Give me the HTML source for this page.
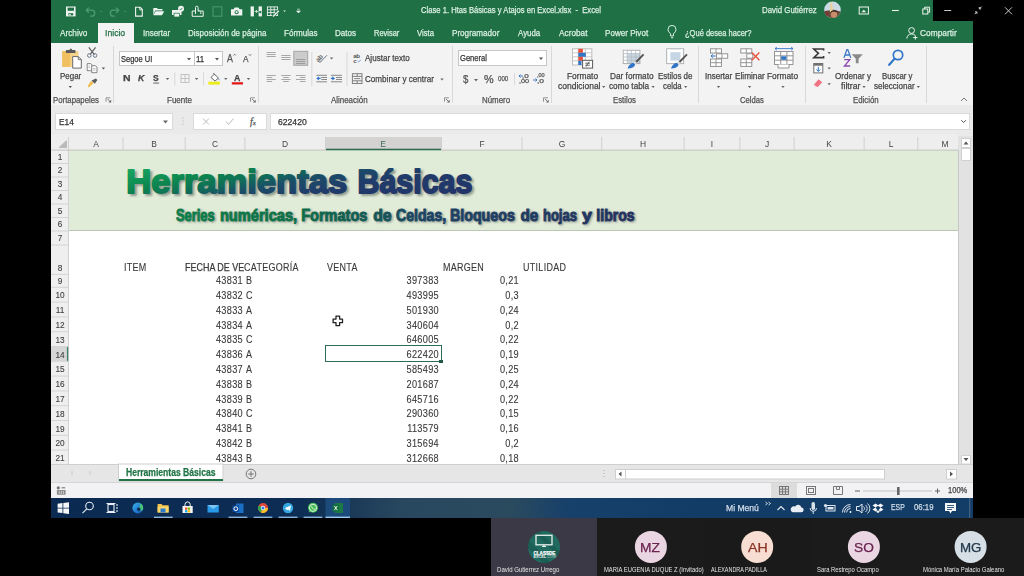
<!DOCTYPE html>
<html><head><meta charset="utf-8">
<style>
*{margin:0;padding:0;box-sizing:border-box}
html,body{width:1024px;height:576px;overflow:hidden;background:#000;font-family:"Liberation Sans",sans-serif}
.a{position:absolute}
.t{position:absolute;white-space:nowrap;line-height:1;-webkit-text-stroke:0.25px currentColor}
#titlebar{left:51px;top:0;width:882px;height:23px;background:#1f7145}
#tabs{left:51px;top:21px;width:922px;height:22px;background:#1f7145}
#ribbon{left:51px;top:43px;width:922px;height:63px;background:#f3f3f3}
#fbar{left:51px;top:105px;width:922px;height:31px;background:#eaeaea}
#colhdr{left:51px;top:134px;width:907px;height:16px;background:#eeeeee}
#grid{left:51px;top:150px;width:910px;height:314px;background:#fff}
#rowhdr{left:51px;top:150px;width:17px;height:314.4px;background:#efefef}
#band{left:68.5px;top:150.3px;width:889.7px;height:81.2px;background:#e0ebd8;border-bottom:1px solid #bcc6b4}
#taskbar{left:51px;top:498px;width:922px;height:20px;background:linear-gradient(90deg,#0b2a52 0%,#0d2d54 27%,#1a3a58 32.6%,#284860 38%,#2a4a5e 50%,#17406a 56%,#123b66 70%,#133c66 100%)}
#zoomstrip{left:491px;top:518px;width:533px;height:58px;background:#1c1c1c}
</style></head><body>
<div id="titlebar" class="a"></div>
<div id="tabs" class="a"></div>
<div id="ribbon" class="a"></div>
<div id="fbar" class="a"></div>
<div id="colhdr" class="a"></div>
<div id="grid" class="a"></div>
<div id="band" class="a"></div>
<div id="rowhdr" class="a"></div>
<div id="taskbar" class="a"></div>
<div id="zoomstrip" class="a"></div>
<svg class="a" style="left:68px;top:150px" width="890" height="81" viewBox="68 150 890 81">
<defs>
<linearGradient id="gt" gradientUnits="userSpaceOnUse" x1="128" y1="168" x2="146.2" y2="259"><stop offset="0" stop-color="#17a862"/><stop offset="0.25" stop-color="#0c844e"/><stop offset="0.37" stop-color="#0f6e58"/><stop offset="0.49" stop-color="#1a4e68"/><stop offset="0.65" stop-color="#203c6a"/><stop offset="1" stop-color="#22346a"/></linearGradient>
<linearGradient id="gs" gradientUnits="userSpaceOnUse" x1="176" y1="0" x2="634" y2="0"><stop offset="0" stop-color="#0e7e4a"/><stop offset="0.25" stop-color="#0c7048"/><stop offset="0.42" stop-color="#145a56"/><stop offset="0.54" stop-color="#1c4464"/><stop offset="1" stop-color="#22325f"/></linearGradient>
<filter id="bl" x="-5%" y="-30%" width="110%" height="160%"><feGaussianBlur stdDeviation="0.9"/></filter>
</defs>
<g filter="url(#bl)"><text x="128.72" y="194.85" font-family="Liberation Sans" font-weight="bold" font-size="34.0" textLength="220.79" lengthAdjust="spacingAndGlyphs" fill="#5f6a5f" fill-opacity="0.5" stroke="#5f6a5f" stroke-opacity="0.5" stroke-width="1.9">Herramientas</text><text x="360.00" y="194.85" font-family="Liberation Sans" font-weight="bold" font-size="34.0" textLength="114.69" lengthAdjust="spacingAndGlyphs" fill="#5f6a5f" fill-opacity="0.5" stroke="#5f6a5f" stroke-opacity="0.5" stroke-width="1.9">Básicas</text></g>
<text x="126.32" y="193.05" font-family="Liberation Sans" font-weight="bold" font-size="34.0" textLength="220.79" lengthAdjust="spacingAndGlyphs" fill="url(#gt)" stroke="url(#gt)" stroke-width="1.9" stroke-linejoin="round">Herramientas</text>
<text x="357.60" y="193.05" font-family="Liberation Sans" font-weight="bold" font-size="34.0" textLength="114.69" lengthAdjust="spacingAndGlyphs" fill="url(#gt)" stroke="url(#gt)" stroke-width="1.9" stroke-linejoin="round">Básicas</text>
<g filter="url(#bl)"><text x="177.50" y="222.45" font-family="Liberation Sans" font-weight="bold" font-size="15.7" textLength="38.57" lengthAdjust="spacingAndGlyphs" fill="#5f6a5f" fill-opacity="0.5" stroke="#5f6a5f" stroke-opacity="0.5" stroke-width="0.9">Series</text><text x="221.40" y="222.45" font-family="Liberation Sans" font-weight="bold" font-size="15.7" textLength="77.21" lengthAdjust="spacingAndGlyphs" fill="#5f6a5f" fill-opacity="0.5" stroke="#5f6a5f" stroke-opacity="0.5" stroke-width="0.9">numéricas,</text><text x="302.67" y="222.45" font-family="Liberation Sans" font-weight="bold" font-size="15.7" textLength="66.28" lengthAdjust="spacingAndGlyphs" fill="#5f6a5f" fill-opacity="0.5" stroke="#5f6a5f" stroke-opacity="0.5" stroke-width="0.9">Formatos</text><text x="374.72" y="222.45" font-family="Liberation Sans" font-weight="bold" font-size="15.7" textLength="18.37" lengthAdjust="spacingAndGlyphs" fill="#5f6a5f" fill-opacity="0.5" stroke="#5f6a5f" stroke-opacity="0.5" stroke-width="0.9">de</text><text x="397.59" y="222.45" font-family="Liberation Sans" font-weight="bold" font-size="15.7" textLength="50.07" lengthAdjust="spacingAndGlyphs" fill="#5f6a5f" fill-opacity="0.5" stroke="#5f6a5f" stroke-opacity="0.5" stroke-width="0.9">Celdas,</text><text x="451.39" y="222.45" font-family="Liberation Sans" font-weight="bold" font-size="15.7" textLength="65.05" lengthAdjust="spacingAndGlyphs" fill="#5f6a5f" fill-opacity="0.5" stroke="#5f6a5f" stroke-opacity="0.5" stroke-width="0.9">Bloqueos</text><text x="522.04" y="222.45" font-family="Liberation Sans" font-weight="bold" font-size="15.7" textLength="17.84" lengthAdjust="spacingAndGlyphs" fill="#5f6a5f" fill-opacity="0.5" stroke="#5f6a5f" stroke-opacity="0.5" stroke-width="0.9">de</text><text x="544.44" y="222.45" font-family="Liberation Sans" font-weight="bold" font-size="15.7" textLength="34.06" lengthAdjust="spacingAndGlyphs" fill="#5f6a5f" fill-opacity="0.5" stroke="#5f6a5f" stroke-opacity="0.5" stroke-width="0.9">hojas</text><text x="583.42" y="222.45" font-family="Liberation Sans" font-weight="bold" font-size="15.7" textLength="9.94" lengthAdjust="spacingAndGlyphs" fill="#5f6a5f" fill-opacity="0.5" stroke="#5f6a5f" stroke-opacity="0.5" stroke-width="0.9">y</text><text x="597.87" y="222.45" font-family="Liberation Sans" font-weight="bold" font-size="15.7" textLength="38.14" lengthAdjust="spacingAndGlyphs" fill="#5f6a5f" fill-opacity="0.5" stroke="#5f6a5f" stroke-opacity="0.5" stroke-width="0.9">libros</text></g>
<text x="176.00" y="221.25" font-family="Liberation Sans" font-weight="bold" font-size="15.7" textLength="38.57" lengthAdjust="spacingAndGlyphs" fill="url(#gs)" stroke="url(#gs)" stroke-width="0.9" stroke-linejoin="round">Series</text>
<text x="219.90" y="221.25" font-family="Liberation Sans" font-weight="bold" font-size="15.7" textLength="77.21" lengthAdjust="spacingAndGlyphs" fill="url(#gs)" stroke="url(#gs)" stroke-width="0.9" stroke-linejoin="round">numéricas,</text>
<text x="301.17" y="221.25" font-family="Liberation Sans" font-weight="bold" font-size="15.7" textLength="66.28" lengthAdjust="spacingAndGlyphs" fill="url(#gs)" stroke="url(#gs)" stroke-width="0.9" stroke-linejoin="round">Formatos</text>
<text x="373.22" y="221.25" font-family="Liberation Sans" font-weight="bold" font-size="15.7" textLength="18.37" lengthAdjust="spacingAndGlyphs" fill="url(#gs)" stroke="url(#gs)" stroke-width="0.9" stroke-linejoin="round">de</text>
<text x="396.09" y="221.25" font-family="Liberation Sans" font-weight="bold" font-size="15.7" textLength="50.07" lengthAdjust="spacingAndGlyphs" fill="url(#gs)" stroke="url(#gs)" stroke-width="0.9" stroke-linejoin="round">Celdas,</text>
<text x="449.89" y="221.25" font-family="Liberation Sans" font-weight="bold" font-size="15.7" textLength="65.05" lengthAdjust="spacingAndGlyphs" fill="url(#gs)" stroke="url(#gs)" stroke-width="0.9" stroke-linejoin="round">Bloqueos</text>
<text x="520.54" y="221.25" font-family="Liberation Sans" font-weight="bold" font-size="15.7" textLength="17.84" lengthAdjust="spacingAndGlyphs" fill="url(#gs)" stroke="url(#gs)" stroke-width="0.9" stroke-linejoin="round">de</text>
<text x="542.94" y="221.25" font-family="Liberation Sans" font-weight="bold" font-size="15.7" textLength="34.06" lengthAdjust="spacingAndGlyphs" fill="url(#gs)" stroke="url(#gs)" stroke-width="0.9" stroke-linejoin="round">hojas</text>
<text x="581.92" y="221.25" font-family="Liberation Sans" font-weight="bold" font-size="15.7" textLength="9.94" lengthAdjust="spacingAndGlyphs" fill="url(#gs)" stroke="url(#gs)" stroke-width="0.9" stroke-linejoin="round">y</text>
<text x="596.37" y="221.25" font-family="Liberation Sans" font-weight="bold" font-size="15.7" textLength="38.14" lengthAdjust="spacingAndGlyphs" fill="url(#gs)" stroke="url(#gs)" stroke-width="0.9" stroke-linejoin="round">libros</text>
</svg>
<svg class="a" style="left:51px;top:136px" width="910" height="15" viewBox="51 136 910 15">
<rect x="325.5" y="137" width="115.5" height="13" fill="#d4d3d2"/><rect x="325.5" y="148.7" width="115.5" height="1.6" fill="#2f6c52"/>
<path d="M66 140.4v7h-7.6z" fill="#c0c0c0"/>
<rect x="68.0" y="137" width="1" height="13" fill="#d0d0d0"/>
<rect x="122.5" y="137" width="1" height="13" fill="#d0d0d0"/>
<rect x="184.7" y="137" width="1" height="13" fill="#d0d0d0"/>
<rect x="244.4" y="137" width="1" height="13" fill="#d0d0d0"/>
<rect x="325.0" y="137" width="1" height="13" fill="#d0d0d0"/>
<rect x="441.0" y="137" width="1" height="13" fill="#d0d0d0"/>
<rect x="521.5" y="137" width="1" height="13" fill="#d0d0d0"/>
<rect x="601.2" y="137" width="1" height="13" fill="#d0d0d0"/>
<rect x="683.6" y="137" width="1" height="13" fill="#d0d0d0"/>
<rect x="739.4" y="137" width="1" height="13" fill="#d0d0d0"/>
<rect x="793.6" y="137" width="1" height="13" fill="#d0d0d0"/>
<rect x="863.6" y="137" width="1" height="13" fill="#d0d0d0"/>
<rect x="917.3" y="137" width="1" height="13" fill="#d0d0d0"/>
<rect x="51" y="149.6" width="274.5" height="1" fill="#c2c2c0"/><rect x="441" y="149.6" width="517" height="1" fill="#c2c2c0"/>
</svg>
<svg class="a" style="left:51px;top:150px" width="18" height="315" viewBox="51 150 18 315">
<rect x="51" y="346.5" width="16" height="14.80" fill="#d6d6d6"/><rect x="66.9" y="346.5" width="1.8" height="14.80" fill="#3a8568"/>
<rect x="51" y="163.00" width="17" height="1" fill="#d4d4d4"/>
<rect x="51" y="176.50" width="17" height="1" fill="#d4d4d4"/>
<rect x="51" y="190.00" width="17" height="1" fill="#d4d4d4"/>
<rect x="51" y="203.50" width="17" height="1" fill="#d4d4d4"/>
<rect x="51" y="217.00" width="17" height="1" fill="#d4d4d4"/>
<rect x="51" y="230.50" width="17" height="1" fill="#d4d4d4"/>
<rect x="51" y="244.50" width="17" height="1" fill="#d4d4d4"/>
<rect x="51" y="273.90" width="17" height="1" fill="#d4d4d4"/>
<rect x="51" y="286.80" width="17" height="1" fill="#d4d4d4"/>
<rect x="51" y="301.60" width="17" height="1" fill="#d4d4d4"/>
<rect x="51" y="316.40" width="17" height="1" fill="#d4d4d4"/>
<rect x="51" y="331.20" width="17" height="1" fill="#d4d4d4"/>
<rect x="51" y="346.00" width="17" height="1" fill="#d4d4d4"/>
<rect x="51" y="360.80" width="17" height="1" fill="#d4d4d4"/>
<rect x="51" y="375.60" width="17" height="1" fill="#d4d4d4"/>
<rect x="51" y="390.40" width="17" height="1" fill="#d4d4d4"/>
<rect x="51" y="405.20" width="17" height="1" fill="#d4d4d4"/>
<rect x="51" y="420.00" width="17" height="1" fill="#d4d4d4"/>
<rect x="51" y="434.80" width="17" height="1" fill="#d4d4d4"/>
<rect x="51" y="449.60" width="17" height="1" fill="#d4d4d4"/>
<rect x="68.2" y="150" width="0.9" height="314.4" fill="#c6c6c6"/>
</svg>
<div class="t" style="left:45.55px;width:100px;text-align:center;top:139.57px;font-size:8.9px;color:#444;transform:scaleX(0.95);-webkit-text-stroke:0">A</div>
<div class="t" style="left:103.90px;width:100px;text-align:center;top:139.57px;font-size:8.9px;color:#444;transform:scaleX(0.95);-webkit-text-stroke:0">B</div>
<div class="t" style="left:164.85px;width:100px;text-align:center;top:139.57px;font-size:8.9px;color:#444;transform:scaleX(0.95);-webkit-text-stroke:0">C</div>
<div class="t" style="left:235.00px;width:100px;text-align:center;top:139.57px;font-size:8.9px;color:#444;transform:scaleX(0.95);-webkit-text-stroke:0">D</div>
<div class="t" style="left:333.30px;width:100px;text-align:center;top:139.57px;font-size:8.9px;color:#3d6b57;transform:scaleX(0.95);-webkit-text-stroke:0">E</div>
<div class="t" style="left:431.55px;width:100px;text-align:center;top:139.57px;font-size:8.9px;color:#444;transform:scaleX(0.95);-webkit-text-stroke:0">F</div>
<div class="t" style="left:511.65px;width:100px;text-align:center;top:139.57px;font-size:8.9px;color:#444;transform:scaleX(0.95);-webkit-text-stroke:0">G</div>
<div class="t" style="left:592.70px;width:100px;text-align:center;top:139.57px;font-size:8.9px;color:#444;transform:scaleX(0.95);-webkit-text-stroke:0">H</div>
<div class="t" style="left:661.80px;width:100px;text-align:center;top:139.57px;font-size:8.9px;color:#444;transform:scaleX(0.95);-webkit-text-stroke:0">I</div>
<div class="t" style="left:716.80px;width:100px;text-align:center;top:139.57px;font-size:8.9px;color:#444;transform:scaleX(0.95);-webkit-text-stroke:0">J</div>
<div class="t" style="left:778.90px;width:100px;text-align:center;top:139.57px;font-size:8.9px;color:#444;transform:scaleX(0.95);-webkit-text-stroke:0">K</div>
<div class="t" style="left:840.75px;width:100px;text-align:center;top:139.57px;font-size:8.9px;color:#444;transform:scaleX(0.95);-webkit-text-stroke:0">L</div>
<div class="t" style="left:895.30px;width:100px;text-align:center;top:139.57px;font-size:8.9px;color:#444;transform:scaleX(0.95);-webkit-text-stroke:0">M</div>
<div class="t" style="left:9.70px;width:100px;text-align:center;top:152.84px;font-size:8.7px;color:#3c3c3c;transform:scaleX(0.95);-webkit-text-stroke:0.1px currentColor">1</div>
<div class="t" style="left:9.70px;width:100px;text-align:center;top:166.34px;font-size:8.7px;color:#3c3c3c;transform:scaleX(0.95);-webkit-text-stroke:0.1px currentColor">2</div>
<div class="t" style="left:9.70px;width:100px;text-align:center;top:179.84px;font-size:8.7px;color:#3c3c3c;transform:scaleX(0.95);-webkit-text-stroke:0.1px currentColor">3</div>
<div class="t" style="left:9.70px;width:100px;text-align:center;top:193.34px;font-size:8.7px;color:#3c3c3c;transform:scaleX(0.95);-webkit-text-stroke:0.1px currentColor">4</div>
<div class="t" style="left:9.70px;width:100px;text-align:center;top:206.84px;font-size:8.7px;color:#3c3c3c;transform:scaleX(0.95);-webkit-text-stroke:0.1px currentColor">5</div>
<div class="t" style="left:9.70px;width:100px;text-align:center;top:220.34px;font-size:8.7px;color:#3c3c3c;transform:scaleX(0.95);-webkit-text-stroke:0.1px currentColor">6</div>
<div class="t" style="left:9.70px;width:100px;text-align:center;top:234.34px;font-size:8.7px;color:#3c3c3c;transform:scaleX(0.95);-webkit-text-stroke:0.1px currentColor">7</div>
<div class="t" style="left:9.70px;width:100px;text-align:center;top:263.74px;font-size:8.7px;color:#3c3c3c;transform:scaleX(0.95);-webkit-text-stroke:0.1px currentColor">8</div>
<div class="t" style="left:9.70px;width:100px;text-align:center;top:276.64px;font-size:8.7px;color:#3c3c3c;transform:scaleX(0.95);-webkit-text-stroke:0.1px currentColor">9</div>
<div class="t" style="left:9.70px;width:100px;text-align:center;top:291.44px;font-size:8.7px;color:#3c3c3c;transform:scaleX(0.95);-webkit-text-stroke:0.1px currentColor">10</div>
<div class="t" style="left:9.70px;width:100px;text-align:center;top:306.24px;font-size:8.7px;color:#3c3c3c;transform:scaleX(0.95);-webkit-text-stroke:0.1px currentColor">11</div>
<div class="t" style="left:9.70px;width:100px;text-align:center;top:321.04px;font-size:8.7px;color:#3c3c3c;transform:scaleX(0.95);-webkit-text-stroke:0.1px currentColor">12</div>
<div class="t" style="left:9.70px;width:100px;text-align:center;top:335.84px;font-size:8.7px;color:#3c3c3c;transform:scaleX(0.95);-webkit-text-stroke:0.1px currentColor">13</div>
<div class="t" style="left:9.70px;width:100px;text-align:center;top:350.64px;font-size:8.7px;color:#3c3c3c;transform:scaleX(0.95);-webkit-text-stroke:0.1px currentColor">14</div>
<div class="t" style="left:9.70px;width:100px;text-align:center;top:365.44px;font-size:8.7px;color:#3c3c3c;transform:scaleX(0.95);-webkit-text-stroke:0.1px currentColor">15</div>
<div class="t" style="left:9.70px;width:100px;text-align:center;top:380.24px;font-size:8.7px;color:#3c3c3c;transform:scaleX(0.95);-webkit-text-stroke:0.1px currentColor">16</div>
<div class="t" style="left:9.70px;width:100px;text-align:center;top:395.04px;font-size:8.7px;color:#3c3c3c;transform:scaleX(0.95);-webkit-text-stroke:0.1px currentColor">17</div>
<div class="t" style="left:9.70px;width:100px;text-align:center;top:409.84px;font-size:8.7px;color:#3c3c3c;transform:scaleX(0.95);-webkit-text-stroke:0.1px currentColor">18</div>
<div class="t" style="left:9.70px;width:100px;text-align:center;top:424.64px;font-size:8.7px;color:#3c3c3c;transform:scaleX(0.95);-webkit-text-stroke:0.1px currentColor">19</div>
<div class="t" style="left:9.70px;width:100px;text-align:center;top:439.44px;font-size:8.7px;color:#3c3c3c;transform:scaleX(0.95);-webkit-text-stroke:0.1px currentColor">20</div>
<div class="t" style="left:9.70px;width:100px;text-align:center;top:454.24px;font-size:8.7px;color:#3c3c3c;transform:scaleX(0.95);-webkit-text-stroke:0.1px currentColor">21</div>
<div class="a" style="left:68px;top:150px;width:890px;height:314px;overflow:hidden">
<div class="t" style="left:55.7px;top:112.98px;font-size:10.3px;color:#3a3a3a;transform:scaleX(0.87);transform-origin:0 0;-webkit-text-stroke:0.12px currentColor;letter-spacing:0.35px">ITEM</div>
<div class="a" style="left:117.19999999999999px;top:0;width:59.20000000000002px;height:314px;overflow:hidden"><div class="t" style="left:0;top:112.98px;font-size:10.3px;color:#3a3a3a;transform:scaleX(0.87);transform-origin:0 0">FECHA DE VENCIMIENTO</div></div>
<div class="t" style="left:176.3px;top:112.98px;font-size:10.3px;color:#3a3a3a;transform:scaleX(0.87);transform-origin:0 0;-webkit-text-stroke:0.12px currentColor;letter-spacing:0.35px">CATEGORÍA</div>
<div class="t" style="left:258.5px;top:112.98px;font-size:10.3px;color:#3a3a3a;transform:scaleX(0.87);transform-origin:0 0;-webkit-text-stroke:0.12px currentColor;letter-spacing:0.35px">VENTA</div>
<div class="t" style="left:374.5px;top:112.98px;font-size:10.3px;color:#3a3a3a;transform:scaleX(0.87);transform-origin:0 0;-webkit-text-stroke:0.12px currentColor;letter-spacing:0.35px">MARGEN</div>
<div class="t" style="left:454.7px;top:112.98px;font-size:10.3px;color:#3a3a3a;transform:scaleX(0.87);transform-origin:0 0;-webkit-text-stroke:0.12px currentColor;letter-spacing:0.35px">UTILIDAD</div>
<div class="t" style="left:-25.3px;width:200px;text-align:right;top:126.03px;font-size:10.3px;color:#3a3a3a;transform:scaleX(0.89);transform-origin:100% 0;-webkit-text-stroke:0.12px currentColor;letter-spacing:0.35px;margin-right:-0.35px">43831</div>
<div class="t" style="left:178.0px;top:126.03px;font-size:10.3px;color:#3a3a3a;transform:scaleX(0.87);transform-origin:0 0;-webkit-text-stroke:0.12px currentColor;letter-spacing:0.35px">B</div>
<div class="t" style="left:171.3px;width:200px;text-align:right;top:126.03px;font-size:10.3px;color:#3a3a3a;transform:scaleX(0.89);transform-origin:100% 0;-webkit-text-stroke:0.12px currentColor;letter-spacing:0.35px;margin-right:-0.35px">397383</div>
<div class="t" style="left:251.1px;width:200px;text-align:right;top:126.03px;font-size:10.3px;color:#3a3a3a;transform:scaleX(0.89);transform-origin:100% 0;-webkit-text-stroke:0.12px currentColor;letter-spacing:0.35px;margin-right:-0.35px">0,21</div>
<div class="t" style="left:-25.3px;width:200px;text-align:right;top:140.98px;font-size:10.3px;color:#3a3a3a;transform:scaleX(0.89);transform-origin:100% 0;-webkit-text-stroke:0.12px currentColor;letter-spacing:0.35px;margin-right:-0.35px">43832</div>
<div class="t" style="left:178.0px;top:140.98px;font-size:10.3px;color:#3a3a3a;transform:scaleX(0.87);transform-origin:0 0;-webkit-text-stroke:0.12px currentColor;letter-spacing:0.35px">C</div>
<div class="t" style="left:171.3px;width:200px;text-align:right;top:140.98px;font-size:10.3px;color:#3a3a3a;transform:scaleX(0.89);transform-origin:100% 0;-webkit-text-stroke:0.12px currentColor;letter-spacing:0.35px;margin-right:-0.35px">493995</div>
<div class="t" style="left:251.1px;width:200px;text-align:right;top:140.98px;font-size:10.3px;color:#3a3a3a;transform:scaleX(0.89);transform-origin:100% 0;-webkit-text-stroke:0.12px currentColor;letter-spacing:0.35px;margin-right:-0.35px">0,3</div>
<div class="t" style="left:-25.3px;width:200px;text-align:right;top:155.78px;font-size:10.3px;color:#3a3a3a;transform:scaleX(0.89);transform-origin:100% 0;-webkit-text-stroke:0.12px currentColor;letter-spacing:0.35px;margin-right:-0.35px">43833</div>
<div class="t" style="left:178.0px;top:155.78px;font-size:10.3px;color:#3a3a3a;transform:scaleX(0.87);transform-origin:0 0;-webkit-text-stroke:0.12px currentColor;letter-spacing:0.35px">A</div>
<div class="t" style="left:171.3px;width:200px;text-align:right;top:155.78px;font-size:10.3px;color:#3a3a3a;transform:scaleX(0.89);transform-origin:100% 0;-webkit-text-stroke:0.12px currentColor;letter-spacing:0.35px;margin-right:-0.35px">501930</div>
<div class="t" style="left:251.1px;width:200px;text-align:right;top:155.78px;font-size:10.3px;color:#3a3a3a;transform:scaleX(0.89);transform-origin:100% 0;-webkit-text-stroke:0.12px currentColor;letter-spacing:0.35px;margin-right:-0.35px">0,24</div>
<div class="t" style="left:-25.3px;width:200px;text-align:right;top:170.58px;font-size:10.3px;color:#3a3a3a;transform:scaleX(0.89);transform-origin:100% 0;-webkit-text-stroke:0.12px currentColor;letter-spacing:0.35px;margin-right:-0.35px">43834</div>
<div class="t" style="left:178.0px;top:170.58px;font-size:10.3px;color:#3a3a3a;transform:scaleX(0.87);transform-origin:0 0;-webkit-text-stroke:0.12px currentColor;letter-spacing:0.35px">A</div>
<div class="t" style="left:171.3px;width:200px;text-align:right;top:170.58px;font-size:10.3px;color:#3a3a3a;transform:scaleX(0.89);transform-origin:100% 0;-webkit-text-stroke:0.12px currentColor;letter-spacing:0.35px;margin-right:-0.35px">340604</div>
<div class="t" style="left:251.1px;width:200px;text-align:right;top:170.58px;font-size:10.3px;color:#3a3a3a;transform:scaleX(0.89);transform-origin:100% 0;-webkit-text-stroke:0.12px currentColor;letter-spacing:0.35px;margin-right:-0.35px">0,2</div>
<div class="t" style="left:-25.3px;width:200px;text-align:right;top:185.38px;font-size:10.3px;color:#3a3a3a;transform:scaleX(0.89);transform-origin:100% 0;-webkit-text-stroke:0.12px currentColor;letter-spacing:0.35px;margin-right:-0.35px">43835</div>
<div class="t" style="left:178.0px;top:185.38px;font-size:10.3px;color:#3a3a3a;transform:scaleX(0.87);transform-origin:0 0;-webkit-text-stroke:0.12px currentColor;letter-spacing:0.35px">C</div>
<div class="t" style="left:171.3px;width:200px;text-align:right;top:185.38px;font-size:10.3px;color:#3a3a3a;transform:scaleX(0.89);transform-origin:100% 0;-webkit-text-stroke:0.12px currentColor;letter-spacing:0.35px;margin-right:-0.35px">646005</div>
<div class="t" style="left:251.1px;width:200px;text-align:right;top:185.38px;font-size:10.3px;color:#3a3a3a;transform:scaleX(0.89);transform-origin:100% 0;-webkit-text-stroke:0.12px currentColor;letter-spacing:0.35px;margin-right:-0.35px">0,22</div>
<div class="t" style="left:-25.3px;width:200px;text-align:right;top:200.18px;font-size:10.3px;color:#3a3a3a;transform:scaleX(0.89);transform-origin:100% 0;-webkit-text-stroke:0.12px currentColor;letter-spacing:0.35px;margin-right:-0.35px">43836</div>
<div class="t" style="left:178.0px;top:200.18px;font-size:10.3px;color:#3a3a3a;transform:scaleX(0.87);transform-origin:0 0;-webkit-text-stroke:0.12px currentColor;letter-spacing:0.35px">A</div>
<div class="t" style="left:171.3px;width:200px;text-align:right;top:200.18px;font-size:10.3px;color:#3a3a3a;transform:scaleX(0.89);transform-origin:100% 0;-webkit-text-stroke:0.12px currentColor;letter-spacing:0.35px;margin-right:-0.35px">622420</div>
<div class="t" style="left:251.1px;width:200px;text-align:right;top:200.18px;font-size:10.3px;color:#3a3a3a;transform:scaleX(0.89);transform-origin:100% 0;-webkit-text-stroke:0.12px currentColor;letter-spacing:0.35px;margin-right:-0.35px">0,19</div>
<div class="t" style="left:-25.3px;width:200px;text-align:right;top:214.98px;font-size:10.3px;color:#3a3a3a;transform:scaleX(0.89);transform-origin:100% 0;-webkit-text-stroke:0.12px currentColor;letter-spacing:0.35px;margin-right:-0.35px">43837</div>
<div class="t" style="left:178.0px;top:214.98px;font-size:10.3px;color:#3a3a3a;transform:scaleX(0.87);transform-origin:0 0;-webkit-text-stroke:0.12px currentColor;letter-spacing:0.35px">A</div>
<div class="t" style="left:171.3px;width:200px;text-align:right;top:214.98px;font-size:10.3px;color:#3a3a3a;transform:scaleX(0.89);transform-origin:100% 0;-webkit-text-stroke:0.12px currentColor;letter-spacing:0.35px;margin-right:-0.35px">585493</div>
<div class="t" style="left:251.1px;width:200px;text-align:right;top:214.98px;font-size:10.3px;color:#3a3a3a;transform:scaleX(0.89);transform-origin:100% 0;-webkit-text-stroke:0.12px currentColor;letter-spacing:0.35px;margin-right:-0.35px">0,25</div>
<div class="t" style="left:-25.3px;width:200px;text-align:right;top:229.78px;font-size:10.3px;color:#3a3a3a;transform:scaleX(0.89);transform-origin:100% 0;-webkit-text-stroke:0.12px currentColor;letter-spacing:0.35px;margin-right:-0.35px">43838</div>
<div class="t" style="left:178.0px;top:229.78px;font-size:10.3px;color:#3a3a3a;transform:scaleX(0.87);transform-origin:0 0;-webkit-text-stroke:0.12px currentColor;letter-spacing:0.35px">B</div>
<div class="t" style="left:171.3px;width:200px;text-align:right;top:229.78px;font-size:10.3px;color:#3a3a3a;transform:scaleX(0.89);transform-origin:100% 0;-webkit-text-stroke:0.12px currentColor;letter-spacing:0.35px;margin-right:-0.35px">201687</div>
<div class="t" style="left:251.1px;width:200px;text-align:right;top:229.78px;font-size:10.3px;color:#3a3a3a;transform:scaleX(0.89);transform-origin:100% 0;-webkit-text-stroke:0.12px currentColor;letter-spacing:0.35px;margin-right:-0.35px">0,24</div>
<div class="t" style="left:-25.3px;width:200px;text-align:right;top:244.58px;font-size:10.3px;color:#3a3a3a;transform:scaleX(0.89);transform-origin:100% 0;-webkit-text-stroke:0.12px currentColor;letter-spacing:0.35px;margin-right:-0.35px">43839</div>
<div class="t" style="left:178.0px;top:244.58px;font-size:10.3px;color:#3a3a3a;transform:scaleX(0.87);transform-origin:0 0;-webkit-text-stroke:0.12px currentColor;letter-spacing:0.35px">B</div>
<div class="t" style="left:171.3px;width:200px;text-align:right;top:244.58px;font-size:10.3px;color:#3a3a3a;transform:scaleX(0.89);transform-origin:100% 0;-webkit-text-stroke:0.12px currentColor;letter-spacing:0.35px;margin-right:-0.35px">645716</div>
<div class="t" style="left:251.1px;width:200px;text-align:right;top:244.58px;font-size:10.3px;color:#3a3a3a;transform:scaleX(0.89);transform-origin:100% 0;-webkit-text-stroke:0.12px currentColor;letter-spacing:0.35px;margin-right:-0.35px">0,22</div>
<div class="t" style="left:-25.3px;width:200px;text-align:right;top:259.38px;font-size:10.3px;color:#3a3a3a;transform:scaleX(0.89);transform-origin:100% 0;-webkit-text-stroke:0.12px currentColor;letter-spacing:0.35px;margin-right:-0.35px">43840</div>
<div class="t" style="left:178.0px;top:259.38px;font-size:10.3px;color:#3a3a3a;transform:scaleX(0.87);transform-origin:0 0;-webkit-text-stroke:0.12px currentColor;letter-spacing:0.35px">C</div>
<div class="t" style="left:171.3px;width:200px;text-align:right;top:259.38px;font-size:10.3px;color:#3a3a3a;transform:scaleX(0.89);transform-origin:100% 0;-webkit-text-stroke:0.12px currentColor;letter-spacing:0.35px;margin-right:-0.35px">290360</div>
<div class="t" style="left:251.1px;width:200px;text-align:right;top:259.38px;font-size:10.3px;color:#3a3a3a;transform:scaleX(0.89);transform-origin:100% 0;-webkit-text-stroke:0.12px currentColor;letter-spacing:0.35px;margin-right:-0.35px">0,15</div>
<div class="t" style="left:-25.3px;width:200px;text-align:right;top:274.18px;font-size:10.3px;color:#3a3a3a;transform:scaleX(0.89);transform-origin:100% 0;-webkit-text-stroke:0.12px currentColor;letter-spacing:0.35px;margin-right:-0.35px">43841</div>
<div class="t" style="left:178.0px;top:274.18px;font-size:10.3px;color:#3a3a3a;transform:scaleX(0.87);transform-origin:0 0;-webkit-text-stroke:0.12px currentColor;letter-spacing:0.35px">B</div>
<div class="t" style="left:171.3px;width:200px;text-align:right;top:274.18px;font-size:10.3px;color:#3a3a3a;transform:scaleX(0.89);transform-origin:100% 0;-webkit-text-stroke:0.12px currentColor;letter-spacing:0.35px;margin-right:-0.35px">113579</div>
<div class="t" style="left:251.1px;width:200px;text-align:right;top:274.18px;font-size:10.3px;color:#3a3a3a;transform:scaleX(0.89);transform-origin:100% 0;-webkit-text-stroke:0.12px currentColor;letter-spacing:0.35px;margin-right:-0.35px">0,16</div>
<div class="t" style="left:-25.3px;width:200px;text-align:right;top:288.98px;font-size:10.3px;color:#3a3a3a;transform:scaleX(0.89);transform-origin:100% 0;-webkit-text-stroke:0.12px currentColor;letter-spacing:0.35px;margin-right:-0.35px">43842</div>
<div class="t" style="left:178.0px;top:288.98px;font-size:10.3px;color:#3a3a3a;transform:scaleX(0.87);transform-origin:0 0;-webkit-text-stroke:0.12px currentColor;letter-spacing:0.35px">B</div>
<div class="t" style="left:171.3px;width:200px;text-align:right;top:288.98px;font-size:10.3px;color:#3a3a3a;transform:scaleX(0.89);transform-origin:100% 0;-webkit-text-stroke:0.12px currentColor;letter-spacing:0.35px;margin-right:-0.35px">315694</div>
<div class="t" style="left:251.1px;width:200px;text-align:right;top:288.98px;font-size:10.3px;color:#3a3a3a;transform:scaleX(0.89);transform-origin:100% 0;-webkit-text-stroke:0.12px currentColor;letter-spacing:0.35px;margin-right:-0.35px">0,2</div>
<div class="t" style="left:-25.3px;width:200px;text-align:right;top:303.78px;font-size:10.3px;color:#3a3a3a;transform:scaleX(0.89);transform-origin:100% 0;-webkit-text-stroke:0.12px currentColor;letter-spacing:0.35px;margin-right:-0.35px">43843</div>
<div class="t" style="left:178.0px;top:303.78px;font-size:10.3px;color:#3a3a3a;transform:scaleX(0.87);transform-origin:0 0;-webkit-text-stroke:0.12px currentColor;letter-spacing:0.35px">B</div>
<div class="t" style="left:171.3px;width:200px;text-align:right;top:303.78px;font-size:10.3px;color:#3a3a3a;transform:scaleX(0.89);transform-origin:100% 0;-webkit-text-stroke:0.12px currentColor;letter-spacing:0.35px;margin-right:-0.35px">312668</div>
<div class="t" style="left:251.1px;width:200px;text-align:right;top:303.78px;font-size:10.3px;color:#3a3a3a;transform:scaleX(0.89);transform-origin:100% 0;-webkit-text-stroke:0.12px currentColor;letter-spacing:0.35px;margin-right:-0.35px">0,18</div>
<div class="a" style="left:256.5px;top:195.4px;width:117.4px;height:17px;border:1.8px solid #2b6d55"></div>
<div class="a" style="left:371px;top:209.6px;width:4px;height:3.6px;background:#1f5a45"></div>
</div>
<svg class="a" style="left:51px;top:0" width="922" height="43" viewBox="51 0 922 43">
 <!-- save -->
 <path d="M66 6.5h9.6v9.9h-9.6z" fill="#eef4f0"/>
 <rect x="67.6" y="7.6" width="6.4" height="3.2" fill="#1f7145"/>
 <rect x="68.4" y="13.2" width="4.8" height="2.2" fill="#1f7145"/>
 <rect x="69.2" y="13.9" width="1.4" height="1.5" fill="#eef4f0"/>
 <!-- undo redo faded -->
 <g fill="none" stroke="#4f9a72" stroke-width="1.3">
  <path d="M86.5 10.2h5.2a3 3 0 0 1 0 6h-1.5"/><path d="M88.8 7.6l-2.5 2.6 2.5 2.6"/>
  <path d="M118.5 10.2h-5.2a3 3 0 0 0 0 6h1.5"/><path d="M116.2 7.6l2.5 2.6-2.5 2.6"/>
 </g>
 <path d="M100 11h2.4l-1.2 1.3zM124 11h2.4l-1.2 1.3z" fill="#4f9a72"/>
 <!-- new doc -->
 <path d="M135.6 7.3h4.6l2.1 2.2v6.6h-6.7z" fill="none" stroke="#eef4f0" stroke-width="1.1"/>
 <path d="M139.8 7.3v2.6h2.5" fill="none" stroke="#eef4f0" stroke-width=".9"/>
 <!-- open folder -->
 <path d="M153.3 8h3.6l1.1 1.1h4.4v1.5h-7.2l-1.9 4.6z" fill="#eef4f0"/>
 <path d="M155.6 11.3h8.6l-2.2 4h-8.6z" fill="#eef4f0"/>
 <!-- quick print -->
 <rect x="172" y="10" width="9.5" height="5" fill="#eef4f0"/>
 <rect x="174" y="13.2" width="5.5" height="3.8" fill="#eef4f0" stroke="#1f7145" stroke-width=".7"/>
 <circle cx="181" cy="8.8" r="3" fill="#eef4f0"/>
 <path d="M179.6 8.9l1 1 1.8-2" fill="none" stroke="#1f7145" stroke-width=".8"/>
 <!-- touch mode -->
 <path d="M192.2 11h11v5.3h-11z" fill="none" stroke="#eef4f0" stroke-width="1"/>
 <path d="M195.5 14v-6.5a1.3 1.3 0 0 1 2.6 0v3.6h1.5q1.2.2 1.2 1.5v1.4" fill="#1f7145" stroke="#eef4f0" stroke-width="1"/>
 <!-- faded device -->
 <rect x="213" y="6.8" width="8.8" height="9.4" fill="none" stroke="#4f9a72" stroke-width="1"/>
 <!-- camera -->
 <path d="M231 9.3h2.6l1.2-1.8h3.6l1.2 1.8h2.7v6.3h-11.3z" fill="#eef4f0"/>
 <circle cx="236.6" cy="12.2" r="2" fill="#1f7145"/><circle cx="236.6" cy="12.2" r="1.1" fill="#eef4f0"/>
 <!-- column insert -->
 <rect x="250.6" y="6.4" width="3.3" height="10" fill="#eef4f0"/>
 <rect x="258.6" y="6.4" width="3.3" height="10" fill="#eef4f0"/>
 <path d="M254.6 11.4h3.6M256.4 9.8v3.2" stroke="#eef4f0" stroke-width=".8"/>
 <rect x="259.3" y="11" width="1.9" height="2.2" fill="#1f7145"/>
 <!-- table pen -->
 <g fill="none" stroke="#eef4f0" stroke-width=".9">
  <rect x="267.4" y="6.9" width="10.2" height="8.6"/>
  <path d="M267.4 9.8h10.2M267.4 12.6h10.2M270.8 6.9v8.6M274.2 6.9v8.6"/>
 </g>
 <path d="M272.6 16.8l6.4-6.4" stroke="#1f7145" stroke-width="2.6"/>
 <path d="M273 16.6l5.8-5.8" stroke="#eef4f0" stroke-width="1.4"/>
 <path d="M283.3 10.6h2.6l-1.3 1.5z" fill="#eef4f0"/>
 <path d="M297 9.2h3M296.6 10.9h3.8l-1.9 2.1z" fill="#eef4f0" stroke="#eef4f0" stroke-width=".6"/>
 <!-- right controls -->
 <rect x="859.2" y="7" width="9.2" height="7" fill="none" stroke="#eef4f0" stroke-width="1"/>
 <path d="M861.5 12.2l2.3-2.4 2.3 2.4z" fill="#eef4f0"/>
 <path d="M892 10.5h6.8" stroke="#eef4f0" stroke-width="1.1"/>
 <g fill="none" stroke="#eef4f0" stroke-width="1"><rect x="922.8" y="9" width="5" height="5"/><path d="M924.6 9v-1.8h5v5h-1.8"/></g>
 <!-- avatar -->
 <defs><clipPath id="avc"><circle cx="832.5" cy="9.8" r="8.3"/></clipPath></defs>
 <circle cx="832.5" cy="9.8" r="8.3" fill="#ccdae6"/>
 <g clip-path="url(#avc)">
  <path d="M824 11.5q3-1.5 5-1l3-1q4 0 6 1.5l4 .5v9h-18z" fill="#6a4a3a"/>
  <path d="M824 11.5l3-.6 2 2-1 3h-4z" fill="#7a3838"/>
  <path d="M830.3 4l1.1-2 1 2 .6 8h-3.2z" fill="#e6d49a"/>
  <ellipse cx="834" cy="14.6" rx="3.2" ry="3.4" fill="#c88e6c"/>
  <path d="M831 12q3-2.2 6.4 0" stroke="#3a2a24" stroke-width="1.2" fill="none"/>
 </g>
 <!-- tab selected -->
 <rect x="98" y="23" width="36" height="20" fill="#f3f3f3"/>
 <!-- lightbulb -->
 <g fill="none" stroke="#d8efe2" stroke-width="1"><path d="M670.6 36v-2.2q-2.6-1.8-2.6-4.4a4 4 0 0 1 8 0q0 2.6-2.6 4.4v2.2z"/><path d="M671 37.8h2.2"/></g>
 <!-- compartir icon -->
 <g fill="none" stroke="#eef4f0" stroke-width="1"><circle cx="911.6" cy="30.5" r="2.9"/><path d="M906.8 38.6q.6-4.6 4.8-4.6q2.2 0 3.4 1.2"/><path d="M915.3 35.4v4.2M913.2 37.5h4.2"/></g>
</svg>
<svg class="a" style="left:933px;top:0" width="91" height="21">
 <path d="M11.2 10.5h7" stroke="#c8c8c8" stroke-width="1"/>
 <path d="M48.6 6.6l-2.3 2.3M46.3 7v1.9h1.9M41.6 14.2l2.3-2.3M42 11.9h1.9v1.9" stroke="#d0d0d0" stroke-width="1" fill="none"/>
 <path d="M72 7.3l7 7M79 7.3l-7 7" stroke="#c8c8c8" stroke-width="1"/>
</svg>
<svg class="a" style="left:51px;top:43px" width="922" height="63" viewBox="51 43 922 63">
 <g fill="#d8d8d8">
  <rect x="113" y="46" width="1" height="57"/>
  <rect x="258" y="46" width="1" height="57"/>
  <rect x="452" y="46" width="1" height="57"/>
  <rect x="551" y="46" width="1" height="57"/>
  <rect x="698" y="46" width="1" height="57"/>
  <rect x="805" y="46" width="1" height="57"/>
  <rect x="926" y="46" width="1" height="57"/>
  <rect x="174.3" y="72.4" width="1" height="13.2"/>
  <rect x="203" y="72.4" width="1" height="13.2"/>
  <rect x="311.3" y="52" width="1" height="34"/>
  <rect x="346.5" y="52" width="1" height="34"/>
  <rect x="514" y="73" width="1" height="12"/>
  
 </g>
 <!-- clipboard -->
 <rect x="62.2" y="51.1" width="16.2" height="15.8" fill="#f5d38a"/>
 <rect x="62.2" y="51.1" width="8" height="15.8" fill="#f0c060"/>
 <path d="M65.9 53v-2.2q0-.8.8-.8h2.8q.2-1.5 1.3-1.5t1.3 1.5h2.6q.8 0 .8.8v2.2z" fill="#5a5a5a"/>
 <path d="M72.7 56.6h5.6l3 3v8.5h-8.6z" fill="#fff" stroke="#6a6a6a" stroke-width="1"/>
 <path d="M78.3 56.6v3h3" fill="none" stroke="#6a6a6a" stroke-width=".9"/>
 <!-- scissors -->
 <g fill="none" stroke="#5a5a5a" stroke-width="1.1"><path d="M88.8 47.3l5.6 7.3M95.6 47.3l-5.6 7.3"/></g>
 <g fill="none" stroke="#6a7a8e" stroke-width="1"><circle cx="89.3" cy="55.5" r="1.8"/><circle cx="95.1" cy="55.5" r="1.8"/></g>
 <!-- copy -->
 <g fill="#fafafa" stroke="#7a7a7a" stroke-width=".9"><path d="M87.2 63.6h3.6l1.4 1.4v5.7h-5z"/><path d="M91.7 65.7h3.8l1.5 1.5v5.5h-5.3z"/></g>
 <path d="M88.5 66h1.5M88.5 67.5h1.5M93 68.5h2.5M93 70h2.5" stroke="#aaa" stroke-width=".6"/>
 <path d="M101.7 67.6h3.4l-1.7 2z" fill="#555"/>
 <!-- brush -->
 <path d="M87.6 86.2l3.4-5.3 2.6 2.2-4.6 4.4z" fill="#f0bd4c"/>
 <path d="M91.5 80.6l4.4-2.2 1.5 1.5-2.6 3.8z" fill="#5a5a5a"/>
 <path d="M68.6 86h3.4l-1.7 2z" fill="#555"/>
 <!-- launcher icons -->
 <path d="M106 101.80000000000001v-4h4.4" fill="none" stroke="#888" stroke-width=".9"/><path d="M107.6 99.0l2.8 2.8" stroke="#666" stroke-width=".9"/><path d="M111.2 99.80000000000001v2.8h-2.8z" fill="#666"/><path d="M250.5 101.80000000000001v-4h4.4" fill="none" stroke="#888" stroke-width=".9"/><path d="M252.1 99.0l2.8 2.8" stroke="#666" stroke-width=".9"/><path d="M255.7 99.80000000000001v2.8h-2.8z" fill="#666"/><path d="M444.5 101.80000000000001v-4h4.4" fill="none" stroke="#888" stroke-width=".9"/><path d="M446.1 99.0l2.8 2.8" stroke="#666" stroke-width=".9"/><path d="M449.7 99.80000000000001v2.8h-2.8z" fill="#666"/><path d="M543.5 101.80000000000001v-4h4.4" fill="none" stroke="#888" stroke-width=".9"/><path d="M545.1 99.0l2.8 2.8" stroke="#666" stroke-width=".9"/><path d="M548.7 99.80000000000001v2.8h-2.8z" fill="#666"/>
 <!-- font boxes -->
 <rect x="119.5" y="51.5" width="75" height="14" fill="#fff" stroke="#c6c6c6"/>
 <rect x="194.5" y="51.5" width="28" height="14" fill="#fff" stroke="#c6c6c6"/>
 <path d="M187 58h4l-2 2.5z M215 58h4l-2 2.5z" fill="#555"/>
 <!-- row2 font -->
 <rect x="153.3" y="82.6" width="5.8" height="0.9" fill="#555"/>
 <path d="M165.8 77.9h3.4l-1.7 2zM194.9 77.9h3.4l-1.7 2zM224.1 77.9h3.4l-1.7 2zM246.8 77.9h3.4l-1.7 2z" fill="#666"/>
 <g fill="none" stroke="#c4c4c4" stroke-width="1"><rect x="181" y="74.5" width="8" height="8"/><path d="M185 74.5v8M181 78.5h8"/></g>
 <path d="M211 77.5l3.2-3.3 4.2 3.6-3.2 3.3z" fill="#fff" stroke="#555" stroke-width="0.9"/>
 <path d="M213.2 73.6q1-.8 1.5.6" fill="none" stroke="#666" stroke-width=".8"/>
 <path d="M218.6 78q1.2 1.2.6 2.4q-1-.6-.6-2.4z" fill="#3a6ab0"/>
 <rect x="208.3" y="81.7" width="11.5" height="2.9" fill="#ecec18"/>
 <rect x="231.8" y="82.2" width="11.2" height="2.3" fill="#e41a1a"/>
 <!-- alignment icons -->
 <g stroke="#a8a8a8" stroke-width="1">
  <path d="M266.6 52.5h9.1M266.6 54.5h9.1M266.6 56.5h9.1"/>
  <path d="M281.3 55.5h9.3M281.3 57.5h9.3M281.3 59.5h9.3"/>
  <path d="M266.6 75.5h9.1M266.6 77.5h5.6M266.6 79.5h9.1M266.6 81.5h5.6"/>
  <path d="M281.3 75.5h9.3M283.2 77.5h5.6M281.3 79.5h9.3M283.2 81.5h5.6"/>
  <path d="M296 75.5h9.5M299.9 77.5h5.6M296 79.5h9.5M299.9 81.5h5.6"/>
 </g>
 <rect x="293.8" y="51.3" width="13.9" height="14" fill="#cbcbcb" stroke="#a6a6a6" stroke-width="1"/>
 <path d="M296 59.5h9.2M296 61.5h9.2M296 63.5h9.2" stroke="#9c9c9c" stroke-width="1.1"/>
 <g stroke="#888" stroke-width="1">
  <path d="M316.3 75.3h10.7M321.2 77.5h5.8M321.2 79.5h5.8M316.3 81.8h10.7"/>
  <path d="M331 75.3h11M336 77.5h6M336 79.5h6M331 81.8h11"/>
 </g>
 <path d="M316.3 78.4l2.6-2.2v4.4z" fill="#2f75c8"/><path d="M318 78.4h2.6" stroke="#2f75c8" stroke-width="1.3"/>
 <path d="M335 78.4l-2.6-2.2v4.4z" fill="#2f75c8"/><path d="M330.8 78.4h2.6" stroke="#2f75c8" stroke-width="1.3"/>
 <!-- orientation -->
 <text x="0" y="0" font-size="6.6" fill="#666" font-family="Liberation Sans" font-weight="bold" transform="translate(318.5,62.6) rotate(-50)">ab</text>
 <path d="M319.5 63l7.5-7.8" stroke="#666" stroke-width=".9"/>
 <path d="M329.9 57.6h3.4l-1.7 2z" fill="#666"/>
 <!-- wrap/merge icons -->
 <text x="353.2" y="57.8" font-size="6.2" fill="#555" font-family="Liberation Sans" font-weight="bold" letter-spacing="-.3">ab</text>
 <text x="353.2" y="62.8" font-size="6.2" fill="#555" font-family="Liberation Sans" font-weight="bold">c</text>
 <path d="M357.6 61l1.2 1 2-2.2" stroke="#6a8ad0" stroke-width=".8" fill="none"/>
 <g fill="none" stroke="#808080" stroke-width="1"><rect x="352.4" y="73.7" width="9.6" height="9.8"/><path d="M352.4 76.4h9.6M352.4 80.8h9.6M357.2 73.7v2.7M357.2 80.8v2.7"/></g>
 <path d="M354.2 78.6h6" stroke="#666" stroke-width=".8"/>
 <path d="M440.3 78.6h3.4l-1.7 2z" fill="#666"/>
 <!-- number -->
 <rect x="458.5" y="50.5" width="88" height="15" fill="#fff" stroke="#c6c6c6"/>
 <path d="M539 57.5h4l-2 2.5z" fill="#555"/>
 <path d="M474 79h4l-2 2.5z" fill="#666"/>
 <!-- Estilos icons -->
 <g>
  <rect x="572.5" y="48.8" width="19.3" height="16.2" fill="#fff" stroke="#bdbdbd" stroke-width="1"/>
  <path d="M572.5 52.8h19.3M572.5 56.8h19.3M572.5 60.8h19.3M578.3 48.8v16.2M585.3 48.8v16.2" stroke="#c8c8c8" stroke-width="1" fill="none"/>
  <rect x="578.3" y="48.8" width="4.6" height="4" fill="#e8503a"/>
  <rect x="578.3" y="52.8" width="7.5" height="4" fill="#2f78c8"/>
  <rect x="578.3" y="56.8" width="4.6" height="4" fill="#e8503a"/>
  <rect x="578.3" y="60.8" width="3.2" height="4.2" fill="#2f78c8"/>
  <rect x="582.6" y="60.3" width="10" height="7.8" fill="#fff" stroke="#5a5a5a" stroke-width="1"/>
  <path d="M585.3 63.2h4.6M585.3 65.2h4.6M589.3 61.6l-3.4 5" stroke="#444" stroke-width=".8"/>
 </g>
 <g>
  <rect x="623.3" y="50.3" width="16.6" height="13.3" fill="#c9d5df" stroke="#a8a8a8" stroke-width="1"/>
  <rect x="623.8" y="50.8" width="15.6" height="2.8" fill="#fff"/>
  <rect x="623.8" y="50.8" width="3.4" height="12.3" fill="#fff"/>
  <path d="M623.3 53.6h16.6M623.3 57h16.6M623.3 60.3h16.6M627.2 50.3v13.3M631.4 50.3v13.3M635.6 50.3v13.3" stroke="#b4bcc4" stroke-width=".8" fill="none"/>
  <path d="M635.2 61.5l7.8-7.8 1.2 1.2-7.6 8z" fill="#505050"/>
  <path d="M627.6 68.4q1.5-4.6 5.6-5.6l2 1.6q-1 4-7.6 4z" fill="#2f75c8"/>
  <path d="M633.4 62.6l2-1.4 1.6 1.6-1.4 2z" fill="#d8d8d8"/>
 </g>
 <g>
  <rect x="666.8" y="48.9" width="16.8" height="14.7" fill="#c6d6e4" stroke="#a8a8a8" stroke-width="1"/>
  <rect x="667.3" y="49.4" width="15.8" height="2.8" fill="#fff"/>
  <rect x="667.3" y="49.4" width="3" height="13.7" fill="#fff"/>
  <rect x="680.5" y="49.4" width="2.6" height="13.7" fill="#fff"/>
  <rect x="667.3" y="60.6" width="15.8" height="2.5" fill="#fff"/>
  <path d="M678.6 61.5l7.8-7.8 1.2 1.2-7.6 8z" fill="#505050"/>
  <path d="M671 68.4q1.5-4.6 5.6-5.6l2 1.6q-1 4-7.6 4z" fill="#2f75c8"/>
  <path d="M676.8 62.6l2-1.4 1.6 1.6-1.4 2z" fill="#d8d8d8"/>
 </g>
 <!-- Celdas icons -->
 <g fill="#fff" stroke="#8a8a8a" stroke-width=".9">
  <rect x="710.5" y="48.8" width="11" height="4.2"/><path d="M716 48.8v4.2"/>
  <rect x="716.5" y="53.8" width="11.2" height="4.4"/><path d="M722 53.8v4.4"/>
  <rect x="710.5" y="59" width="11" height="7.4"/><path d="M710.5 62.7h11M716 59v7.4"/>
  <rect x="740.8" y="48.8" width="11" height="4.2"/><path d="M746.3 48.8v4.2"/>
  <rect x="746.8" y="53.8" width="6" height="4.4"/>
  <rect x="740.8" y="59" width="11" height="7.4"/><path d="M740.8 62.7h11M746.3 59v7.4"/>
 </g>
 <path d="M711 56h4.6M712.8 54.4l-1.8 1.6 1.8 1.6" stroke="#2f75c8" stroke-width="1" fill="none"/>
 <path d="M751.8 52.6l7.6 7.6M759.4 52.6l-7.6 7.6" stroke="#e8553f" stroke-width="1.4"/>
 <g fill="#fff" stroke="#8a8a8a" stroke-width=".9">
  <rect x="774.5" y="51.5" width="18.5" height="13"/>
  <path d="M774.5 55.8h18.5M774.5 60.2h18.5M780.7 51.5v13M786.9 51.5v13"/>
  <path d="M778 64.5v3.5h11v-3.5"/>
 </g>
 <rect x="781.2" y="56.3" width="5.2" height="3.5" fill="#2f75c8"/>
 <path d="M775 48.6h18M776.8 47.2l-1.8 1.4 1.8 1.4M791.2 47.2l1.8 1.4-1.8 1.4" stroke="#2f75c8" stroke-width=".9" fill="none"/>
 <path d="M716.8 86h3.4l-1.7 2zM747.9 86h3.4l-1.7 2zM781.3 86h3.4l-1.7 2z" fill="#666"/>
 <!-- Edición -->
 <path d="M823.6 50.6v-1.6h-9.8l4.6 4.3-4.6 4.3h9.8v-1.6" fill="none" stroke="#3a3a3a" stroke-width="1.6"/>
 <path d="M827.5 52.1h3.4l-1.7 2zM827.5 67.6h3.4l-1.7 2zM827.5 83.2h3.4l-1.7 2z" fill="#666"/>
 <rect x="813.8" y="63.5" width="9" height="9.4" fill="#fff" stroke="#707070" stroke-width="1"/>
 <rect x="813.8" y="63.5" width="9" height="2.2" fill="#707070"/>
 <path d="M818.3 66.8v4.6M816.3 69.4l2 2 2-2" stroke="#2f75c8" stroke-width="1" fill="none"/>
 <path d="M814 84.6l4.6-5.4 3.6 3-4.6 5z" fill="#f07282"/>
 <path d="M814 84.6l2.2 2.2" stroke="#f6a0ac" stroke-width="1"/>
 <path d="M843.9 57.9l3-8.3h.9l3 8.3M845 55h4.2" fill="none" stroke="#3a78c8" stroke-width="1.3"/>
 <path d="M844.2 59.6h5.6l-5.4 6.4h5.8" fill="none" stroke="#8a4ab0" stroke-width="1.3"/>
 <path d="M851.6 54.2h11.2l-4.2 4.6v4.4h-2.8v-4.4z" fill="#8a8a8a"/>
 <circle cx="898" cy="55" r="4.7" fill="none" stroke="#2f75c8" stroke-width="1.7"/>
 <path d="M894.6 58.6l-5.4 6.2" stroke="#2f75c8" stroke-width="2.2" stroke-linecap="round"/>
 <path d="M961 101l3-3 3 3" fill="none" stroke="#777" stroke-width="1"/>

 <!-- extra: small arrows for gallery labels -->
 <path d="M602 86h3.4l-1.7 2zM651.4 86h3.4l-1.7 2zM684 86h3.4l-1.7 2zM862.3 86h3.4l-1.7 2zM916.6 86h3.4l-1.7 2z" fill="#666"/>
 <!-- A^ A˅ -->
 <path d="M233.5 55.5l1.2-1.3 1.2 1.3M248.8 54.3l1.2 1.3 1.2-1.3" fill="none" stroke="#555" stroke-width=".8"/>
 <!-- decimal arrows -->
 <path d="M519 76h4M520.5 74.5l-1.5 1.5 1.5 1.5M533 80h4M535.5 78.5l1.5 1.5-1.5 1.5" fill="none" stroke="#2f6fc0" stroke-width=".9"/>
</svg>
<svg class="a" style="left:51px;top:106px" width="922" height="44" viewBox="51 106 922 44">
 <rect x="51" y="105" width="922" height="1" fill="#dadada"/><!-- ribbon-shadow -->
 <rect x="55.5" y="113.5" width="117" height="16" fill="#fff" stroke="#dadada"/>
 <path d="M163 120.5h5l-2.5 3z" fill="#666"/>
 <g fill="#aaa"><circle cx="183" cy="118" r=".6"/><circle cx="183" cy="121" r=".6"/><circle cx="183" cy="124" r=".6"/></g>
 <rect x="193.5" y="113.5" width="73" height="16" fill="#fff" stroke="#dadada"/>
 <path d="M203 118.5l6 6M209 118.5l-6 6" stroke="#bbb" stroke-width="1"/>
 <path d="M226 121.5l2.5 3 5-6" stroke="#bbb" stroke-width="1" fill="none"/>
 <rect x="270.5" y="113.5" width="699" height="16" fill="#fff" stroke="#dadada"/>
 <path d="M961.3 120.2l2.3 2.3 2.3-2.3" stroke="#555" stroke-width="1" fill="none"/>
 <path d="M58 148v-8l-8 8z" fill="#bbb" transform="translate(9,0)"/>
</svg>
<svg class="a" style="left:51px;top:136px" width="922" height="362" viewBox="51 136 922 362">
 <rect x="958" y="136" width="15" height="328" fill="#e2e2e2"/>
 <rect x="961.5" y="138.5" width="9" height="9" fill="#fff" stroke="#d0d0d0"/>
 <path d="M963.5 144.5h5l-2.5-3z" fill="#555"/>
 <rect x="961.5" y="148.5" width="9" height="12" fill="#fff" stroke="#d0d0d0"/>
 <rect x="961.5" y="455.5" width="9" height="8.5" fill="#fff" stroke="#d0d0d0"/>
 <path d="M963.5 458h5l-2.5 3z" fill="#555"/>
 <rect x="958" y="150" width="1" height="314" fill="#c8c8c8"/>
 <!-- tab bar -->
 <rect x="51" y="464" width="922" height="19" fill="#e6e6e6"/>
 <rect x="51" y="464" width="922" height="1" fill="#cfcfcf"/>
 <rect x="51" y="482" width="922" height="1" fill="#d6d6d6"/>
 <path d="M72 471v4M90 471v4" stroke="#c8c8c8" stroke-width="1"/>
 <rect x="118.5" y="464" width="104.5" height="17" fill="#fff" stroke="#cfcfcf"/>
 <rect x="119" y="479" width="104" height="2" fill="#217346"/>
 <circle cx="251" cy="474" r="4.8" fill="none" stroke="#777" stroke-width="1"/>
 <path d="M248.2 474h5.6M251 471.2v5.6" stroke="#777" stroke-width="1.1"/>
 <g fill="#aaa"><circle cx="604" cy="470.5" r=".6"/><circle cx="604" cy="473.5" r=".6"/><circle cx="604" cy="476.5" r=".6"/></g>
 <rect x="615.5" y="469.5" width="10" height="9.5" fill="#fff" stroke="#cfcfcf"/>
 <path d="M621.5 471.5v5l-3-2.5z" fill="#555"/>
 <rect x="625.5" y="469.5" width="259" height="9.5" fill="#fff" stroke="#cfcfcf"/>
 <rect x="946.5" y="469.5" width="10" height="9.5" fill="#fff" stroke="#cfcfcf"/>
 <path d="M950 471.5v5l3-2.5z" fill="#555"/>
 <!-- status -->
 <rect x="51" y="483" width="922" height="15" fill="#f2f1f3"/>
 <circle cx="58.3" cy="487.8" r="1.6" fill="#777"/><rect x="61.6" y="487.1" width="3.6" height="1.3" fill="#888"/>
 <rect x="56.9" y="490" width="8.7" height="4.8" rx=".6" fill="#8c8c8c"/>
 <path d="M59.2 490.8v3.2M61.3 490.8v3.2M63.4 490.8v3.2" stroke="#e8e8e8" stroke-width=".7"/>
 <rect x="771" y="483" width="26" height="15" fill="#dcdcdc"/>
 <g fill="none" stroke="#777" stroke-width="1">
  <rect x="779.5" y="486.5" width="9" height="8"/><path d="M779.5 489.2h9M779.5 491.8h9M782.5 486.5v8M785.5 486.5v8"/>
  <rect x="806.5" y="486.5" width="9" height="8"/><rect x="808.5" y="488.5" width="5" height="4"/>
  <path d="M833.5 494.5v-8h9v8z M836.5 486.5v3h3v-3"/>
 </g>
 <path d="M855 491h5M935 491h5M937.5 488.5v5" stroke="#666" stroke-width="1"/>
 <rect x="863" y="490.5" width="69" height="1" fill="#c4c4c4"/>
 <rect x="897" y="487" width="2.6" height="8" fill="#666"/>
</svg>
<svg class="a" style="left:51px;top:498px" width="922" height="20" viewBox="51 498 922 20">
 <g fill="#f4f6f8">
  <path d="M57.6 503.8l4.9-.7v4.6h-4.9z"/><path d="M63.3 503l5.7-.8v5.5h-5.7z"/>
  <path d="M57.6 508.5h4.9v4.6l-4.9-.7z"/><path d="M63.3 508.5h5.7v5.5l-5.7-.8z"/>
 </g>
 <g fill="none" stroke="#e8eef4" stroke-width="1.1">
  <circle cx="89.5" cy="506" r="3.8"/><path d="M86.8 508.8l-4.3 4.3"/>
  <rect x="108" y="504.5" width="6" height="7"/><path d="M106.5 503.5h9M106.5 512.5h9M117 504v2M117 507v2M117 510v2"/>
 </g>
 <defs><linearGradient id="edg" x1="0" y1="0" x2="1" y2="1"><stop offset="0" stop-color="#40b4e8"/><stop offset=".6" stop-color="#1f78d0"/><stop offset="1" stop-color="#1850a8"/></linearGradient></defs>
 <circle cx="137.8" cy="508" r="5.4" fill="url(#edg)"/>
 <path d="M140.2 503.2a5.4 5.4 0 0 1 2.6 6.6q-1 1.4-2.8.6q-1.2-.8-.6-2.6q.4-2.4.8-4.6z" fill="#44c47a"/>
 <circle cx="138.8" cy="509.2" r="1.7" fill="#0b2c4c"/>
 <!-- explorer -->
 <path d="M157.6 504h4l1 1.3h6v7.2h-11z" fill="#f2c24a"/>
 <rect x="157.6" y="506.5" width="11" height="6" fill="#f8d66a"/>
 <rect x="160.5" y="508.5" width="5" height="4" fill="#2a7ad0"/>
 <!-- store -->
 <path d="M182.5 506h10.2v7h-10.2z" fill="#f4f4f4"/><path d="M185 506v-1.5a2.6 2.6 0 0 1 5.2 0v1.5" fill="none" stroke="#f4f4f4" stroke-width="1"/>
 <rect x="185" y="507.5" width="2.3" height="2.2" fill="#f25022"/><rect x="187.8" y="507.5" width="2.3" height="2.2" fill="#7fba00"/>
 <rect x="185" y="510.2" width="2.3" height="2.2" fill="#00a4ef"/><rect x="187.8" y="510.2" width="2.3" height="2.2" fill="#ffb900"/>
 <!-- mail -->
 <rect x="207.5" y="505" width="11.3" height="7.5" fill="#2a9ae8"/>
 <path d="M207.5 505l5.65 4 5.65-4" fill="#7cc4f4"/>
 <!-- outlook -->
 <rect x="236" y="503.5" width="7.5" height="9.5" fill="#1a6fc4"/>
 <rect x="232.5" y="505.5" width="6.5" height="6.5" fill="#0a4a9a"/>
 <circle cx="235.8" cy="508.7" r="1.9" fill="none" stroke="#fff" stroke-width="1"/>
 <!-- chrome -->
 <circle cx="263" cy="508" r="5" fill="#e0463a"/>
 <path d="M263 508l-4.3-2.5a5 5 0 0 0 2.1 6.9z" fill="#2fa84f"/>
 <path d="M263 508l-2.2 4.4a5 5 0 0 0 7.2-4.4z" fill="#f6c026"/>
 <circle cx="263" cy="508" r="2.2" fill="#fff"/><circle cx="263" cy="508" r="1.6" fill="#3a7ae0"/>
 <!-- telegram -->
 <circle cx="288" cy="508" r="5.2" fill="#35a6e0"/>
 <path d="M285 508l6-2.5-1 5.5-2-1.5-1 1z" fill="#fff"/>
 <!-- whatsapp -->
 <circle cx="313" cy="507.8" r="5" fill="#48bd58"/>
 <path d="M308.6 512.6l.9-2.6 1.8 1.5z" fill="#48bd58"/>
 <circle cx="313" cy="507.8" r="3.6" fill="none" stroke="#e8f8ea" stroke-width=".9"/>
 <path d="M311.5 506.3q.3 2.6 3.1 3.1l.8-.8" fill="none" stroke="#e8f8ea" stroke-width=".8"/>
 <!-- excel active -->
 <rect x="325.5" y="498" width="24.5" height="20" fill="#1c4a7a"/>
 <rect x="335" y="503" width="8" height="10" fill="#1e7a44"/>
 <rect x="332.5" y="504.5" width="6.5" height="7" fill="#107040"/>
 <path d="M334.3 506l3 4.2M337.3 506l-3 4.2" stroke="#fff" stroke-width=".9"/>
 <g fill="#8ab4dc">
  <rect x="154" y="516.6" width="18.7" height="1.4"/>
  <rect x="228.6" y="516.6" width="18.7" height="1.4"/>
  <rect x="253.6" y="516.6" width="18.7" height="1.4"/>
  <rect x="278.6" y="516.6" width="18.9" height="1.4"/>
  <rect x="303.6" y="516.6" width="18.7" height="1.4"/>
  <rect x="325.5" y="516.6" width="24.5" height="1.4" fill="#9ccaf0"/>
 </g>
 <!-- tray -->
 <path d="M765.5 502l2 1.5-2 1.5M768.5 502l2 1.5-2 1.5" fill="none" stroke="#dde6ef" stroke-width=".9"/>
 <path d="M777.5 510l3.5-3.5 3.5 3.5" fill="none" stroke="#e8eef4" stroke-width="1.1"/>
 <path d="M792.6 512.2h8.6a2.3 2.3 0 0 0 .2-4.6a3.3 3.3 0 0 0-6.2-1a2.8 2.8 0 0 0-2.6 5.6z" fill="#e8eef4"/>
 <rect x="811.5" y="502" width="3.5" height="8" rx="1.7" fill="#d8e0e8"/>
 <path d="M810 508a3 3 0 0 0 6.5 0M813.2 511v3" fill="none" stroke="#d8e0e8" stroke-width="1"/>
 <rect x="826" y="505.5" width="9" height="5.5" fill="none" stroke="#dde6ef" stroke-width="1"/>
 <circle cx="825.5" cy="505.5" r="1.6" fill="#dde6ef"/><rect x="827.5" y="507" width="6" height="2.5" fill="#dde6ef"/>
 <path d="M842.5 512.5a8 8 0 0 1 8-8M844.5 512.5a6 6 0 0 1 6-6M846.5 512.5a4 4 0 0 1 4-4" fill="none" stroke="#dde6ef" stroke-width="1"/>
 <circle cx="850.5" cy="512" r=".9" fill="#fff"/>
 <path d="M856.5 506.5h2.5l3-2.5v9l-3-2.5h-2.5z" fill="none" stroke="#e8eef4" stroke-width="1"/>
 <path d="M863.5 506.5a2.5 2.5 0 0 1 0 4M865.5 505a4.5 4.5 0 0 1 0 7M867.5 503.5a6.5 6.5 0 0 1 0 10" fill="none" stroke="#e8eef4" stroke-width=".9"/>
 <path d="M875.5 503.5l-3 2 3 2 3-2zM880.5 503.5l-3 2 3 2 3-2zM875.5 507.5l-3 2 3 2 2-1.3M880.5 507.5l3 2-3 2-2-1.3M878 510.5l-2 1.2 2 1.3 2-1.3z" fill="#f4f6f8"/>
 <path d="M945 503h11v8h-4l-1.5 2.5-1.5-2.5h-4z" fill="#f4f6f8"/>
 <path d="M947 505.5h7M947 507.5h7M947 509.5h5" stroke="#0f3560" stroke-width=".8"/>
 <rect x="969.2" y="498" width="1" height="20" fill="#4a6a8a"/>
</svg>
<svg class="a" style="left:491px;top:518px" width="533" height="58" viewBox="491 518 533 58">
 <rect x="491" y="518" width="106" height="58" fill="#3a3945"/>
 <rect x="597" y="518" width="107" height="58" fill="#1c1b1c"/>
 <rect x="704" y="518" width="106" height="58" fill="#1a1a1a"/>
 <rect x="810" y="518" width="107" height="58" fill="#1b1b1b"/>
 <rect x="917" y="518" width="107" height="58" fill="#1b1b1b"/>
 <defs><clipPath id="lc"><circle cx="544" cy="547" r="16"/></clipPath></defs>
 <circle cx="544" cy="547" r="16" fill="#206a60"/>
 <g clip-path="url(#lc)" opacity=".5"><path d="M520 540l30 30h8l-30-30zM532 530l30 30h6l-30-30z" fill="#15524a"/></g>
 <rect x="536" y="535.3" width="16" height="9.5" fill="none" stroke="#e8f0ee" stroke-width="1.3"/>
 <path d="M542 546.5h4M544 545v1.5" stroke="#e8f0ee" stroke-width="1.2"/>
 <text x="533.6" y="554.6" font-family="Liberation Sans" font-weight="bold" font-size="4.8" fill="#ffffff" stroke="#ffffff" stroke-width=".25" textLength="21.6" lengthAdjust="spacingAndGlyphs">CLASSDE</text>
 <text x="533.5" y="558.3" font-family="Liberation Sans" font-weight="bold" font-size="3.8" fill="#f0f4f2">EXCEL<tspan fill="#8ab0a8">.COM</tspan></text>
 <circle cx="650.9" cy="546.9" r="16" fill="#ead6e2"/>
 <circle cx="757.2" cy="546.9" r="16" fill="#f7ddd2"/>
 <circle cx="863.9" cy="546.9" r="16" fill="#ead6e2"/>
 <circle cx="970.6" cy="546.9" r="16" fill="#d5dfe5"/>
</svg>
<svg class="a" style="left:331.5px;top:315.2px" width="12" height="12" viewBox="0 0 12 12">
 <path d="M4 1.2h3.6v2.9h2.9v3.6h-2.9v2.9h-3.6v-2.9h-2.9v-3.6h2.9z" fill="#fff" stroke="#222" stroke-width="1.3" stroke-linejoin="round"/>
</svg>
<div class="t" style="left:421.12px;top:5.91px;font-size:9.2px;color:#dcefe4;transform:scaleX(0.831);transform-origin:0 0;white-space:pre">Clase 1. Htas Básicas y Atajos en Excel.xlsx  -  Excel</div>
<div class="t" style="left:762.37px;top:5.91px;font-size:9.2px;color:#dcefe4;transform:scaleX(0.858);transform-origin:0 0;">David Gutiérrez</div>
<div class="t" style="left:60.30px;top:28.34px;font-size:9.4px;color:#dcefe4;transform:scaleX(0.878);transform-origin:0 0;">Archivo</div>
<div class="t" style="left:142.88px;top:28.34px;font-size:9.4px;color:#dcefe4;transform:scaleX(0.852);transform-origin:0 0;">Insertar</div>
<div class="t" style="left:187.96px;top:28.34px;font-size:9.4px;color:#dcefe4;transform:scaleX(0.854);transform-origin:0 0;">Disposición de página</div>
<div class="t" style="left:284.25px;top:28.34px;font-size:9.4px;color:#dcefe4;transform:scaleX(0.861);transform-origin:0 0;">Fórmulas</div>
<div class="t" style="left:335.05px;top:28.34px;font-size:9.4px;color:#dcefe4;transform:scaleX(0.861);transform-origin:0 0;">Datos</div>
<div class="t" style="left:373.70px;top:28.34px;font-size:9.4px;color:#dcefe4;transform:scaleX(0.797);transform-origin:0 0;">Revisar</div>
<div class="t" style="left:417.46px;top:28.34px;font-size:9.4px;color:#dcefe4;transform:scaleX(0.822);transform-origin:0 0;">Vista</div>
<div class="t" style="left:452.35px;top:28.34px;font-size:9.4px;color:#dcefe4;transform:scaleX(0.865);transform-origin:0 0;">Programador</div>
<div class="t" style="left:518.20px;top:28.34px;font-size:9.4px;color:#dcefe4;transform:scaleX(0.843);transform-origin:0 0;">Ayuda</div>
<div class="t" style="left:559.00px;top:28.34px;font-size:9.4px;color:#dcefe4;transform:scaleX(0.881);transform-origin:0 0;">Acrobat</div>
<div class="t" style="left:605.15px;top:28.34px;font-size:9.4px;color:#dcefe4;transform:scaleX(0.863);transform-origin:0 0;">Power Pivot</div>
<div class="t" style="left:684.71px;top:28.34px;font-size:9.4px;color:#dcefe4;transform:scaleX(0.803);transform-origin:0 0;">¿Qué desea hacer?</div>
<div class="t" style="left:919.58px;top:28.34px;font-size:9.4px;color:#dcefe4;transform:scaleX(0.893);transform-origin:0 0;">Compartir</div>
<div class="t" style="left:105.12px;top:28.34px;font-size:9.4px;color:#1f6f45;transform:scaleX(0.922);transform-origin:0 0;">Inicio</div>
<div class="t" style="left:60.06px;top:71.88px;font-size:9.0px;color:#444;transform:scaleX(0.885);transform-origin:0 0;">Pegar</div>
<div class="t" style="left:53.48px;top:95.72px;font-size:8.6px;color:#505050;transform:scaleX(0.907);transform-origin:0 0;">Portapapeles</div>
<div class="t" style="left:167.26px;top:95.72px;font-size:8.6px;color:#505050;transform:scaleX(0.933);transform-origin:0 0;">Fuente</div>
<div class="t" style="left:331.30px;top:95.72px;font-size:8.6px;color:#505050;transform:scaleX(0.922);transform-origin:0 0;">Alineación</div>
<div class="t" style="left:481.87px;top:95.72px;font-size:8.6px;color:#505050;transform:scaleX(0.921);transform-origin:0 0;">Número</div>
<div class="t" style="left:613.18px;top:95.72px;font-size:8.6px;color:#505050;transform:scaleX(0.908);transform-origin:0 0;">Estilos</div>
<div class="t" style="left:739.62px;top:95.72px;font-size:8.6px;color:#505050;transform:scaleX(0.894);transform-origin:0 0;">Celdas</div>
<div class="t" style="left:852.77px;top:95.72px;font-size:8.6px;color:#505050;transform:scaleX(0.911);transform-origin:0 0;">Edición</div>
<div class="t" style="left:121.46px;top:54.78px;font-size:9.0px;color:#333;transform:scaleX(0.835);transform-origin:0 0;">Segoe UI</div>
<div class="t" style="left:196.01px;top:54.78px;font-size:9.0px;color:#333;transform:scaleX(0.874);transform-origin:0 0;">11</div>
<div class="t" style="left:123.12px;top:73.97px;font-size:8.9px;font-weight:bold;color:#444;transform:scaleX(1.181);transform-origin:0 0;">N</div>
<div class="t" style="left:138.03px;top:73.97px;font-size:8.9px;font-weight:bold;color:#444;transform:scaleX(0.993);transform-origin:0 0;font-style:italic">K</div>
<div class="t" style="left:153.34px;top:73.97px;font-size:8.9px;font-weight:bold;color:#444;transform:scaleX(0.955);transform-origin:0 0;">S</div>
<div class="t" style="left:365.30px;top:54.01px;font-size:9.2px;color:#444;transform:scaleX(0.877);transform-origin:0 0;">Ajustar texto</div>
<div class="t" style="left:364.89px;top:75.11px;font-size:9.2px;color:#444;transform:scaleX(0.882);transform-origin:0 0;">Combinar y centrar</div>
<div class="t" style="left:460.32px;top:53.88px;font-size:9.0px;color:#333;transform:scaleX(0.843);transform-origin:0 0;">General</div>
<div class="t" style="left:566.63px;top:71.68px;font-size:9.0px;color:#444;transform:scaleX(0.926);transform-origin:0 0;">Formato</div>
<div class="t" style="left:558.36px;top:81.78px;font-size:9.0px;color:#444;transform:scaleX(0.944);transform-origin:0 0;">condicional</div>
<div class="t" style="left:609.84px;top:71.68px;font-size:9.0px;color:#444;transform:scaleX(0.917);transform-origin:0 0;">Dar formato</div>
<div class="t" style="left:609.17px;top:81.78px;font-size:9.0px;color:#444;transform:scaleX(0.912);transform-origin:0 0;">como tabla</div>
<div class="t" style="left:657.56px;top:71.68px;font-size:9.0px;color:#444;transform:scaleX(0.883);transform-origin:0 0;">Estilos de</div>
<div class="t" style="left:662.99px;top:81.78px;font-size:9.0px;color:#444;transform:scaleX(0.865);transform-origin:0 0;">celda</div>
<div class="t" style="left:705.08px;top:71.68px;font-size:9.0px;color:#444;transform:scaleX(0.893);transform-origin:0 0;">Insertar</div>
<div class="t" style="left:734.94px;top:71.68px;font-size:9.0px;color:#444;transform:scaleX(0.915);transform-origin:0 0;">Eliminar</div>
<div class="t" style="left:767.33px;top:71.68px;font-size:9.0px;color:#444;transform:scaleX(0.926);transform-origin:0 0;">Formato</div>
<div class="t" style="left:835.44px;top:71.68px;font-size:9.0px;color:#444;transform:scaleX(0.899);transform-origin:0 0;">Ordenar y</div>
<div class="t" style="left:840.87px;top:81.78px;font-size:9.0px;color:#444;transform:scaleX(0.977);transform-origin:0 0;">filtrar</div>
<div class="t" style="left:881.77px;top:71.68px;font-size:9.0px;color:#444;transform:scaleX(0.869);transform-origin:0 0;">Buscar y</div>
<div class="t" style="left:874.30px;top:81.78px;font-size:9.0px;color:#444;transform:scaleX(0.894);transform-origin:0 0;">seleccionar</div>
<div class="t" style="left:58.83px;top:117.98px;font-size:9.0px;color:#333;transform:scaleX(0.929);transform-origin:0 0;">E14</div>
<div class="t" style="left:277.57px;top:117.98px;font-size:9.0px;color:#333;transform:scaleX(0.957);transform-origin:0 0;">622420</div>
<div class="t" style="left:126.44px;top:468.34px;font-size:10.0px;font-weight:bold;color:#217346;transform:scaleX(0.856);transform-origin:0 0;">Herramientas Básicas</div>
<div class="t" style="left:948.43px;top:487.36px;font-size:8.2px;color:#444;transform:scaleX(0.921);transform-origin:0 0;">100%</div>
<div class="t" style="left:725.91px;top:503.68px;font-size:9.0px;color:#d2deea;transform:scaleX(0.953);transform-origin:0 0;">Mi Menú</div>
<div class="t" style="left:891.15px;top:503.38px;font-size:9.0px;color:#d2deea;transform:scaleX(0.761);transform-origin:0 0;">ESP</div>
<div class="t" style="left:914.19px;top:503.38px;font-size:9.0px;color:#d2deea;transform:scaleX(0.865);transform-origin:0 0;">06:19</div>
<div class="t" style="left:496.61px;top:567.21px;font-size:6.6px;color:#e4e4e4;transform:scaleX(0.920);transform-origin:0 0;-webkit-text-stroke:0">David Gutierrez Urrego</div>
<div class="t" style="left:603.53px;top:567.21px;font-size:6.6px;color:#e4e4e4;transform:scaleX(0.886);transform-origin:0 0;-webkit-text-stroke:0">MARIA EUGENIA DUQUE Z (Invitado)</div>
<div class="t" style="left:711.00px;top:567.21px;font-size:6.6px;color:#e4e4e4;transform:scaleX(0.822);transform-origin:0 0;-webkit-text-stroke:0">ALEXANDRA PADILLA</div>
<div class="t" style="left:816.74px;top:567.21px;font-size:6.6px;color:#e4e4e4;transform:scaleX(0.890);transform-origin:0 0;-webkit-text-stroke:0">Sara Restrepo Ocampo</div>
<div class="t" style="left:923.22px;top:567.21px;font-size:6.6px;color:#e4e4e4;transform:scaleX(0.902);transform-origin:0 0;-webkit-text-stroke:0">Mónica María Palacio Galeano</div>
<div class="t" style="left:640.30px;top:541.93px;font-size:12.6px;color:#6a2350;transform:scaleX(1.094);transform-origin:0 0;">MZ</div>
<div class="t" style="left:748.00px;top:541.93px;font-size:12.6px;color:#8a3525;transform:scaleX(1.125);transform-origin:0 0;">AH</div>
<div class="t" style="left:853.88px;top:541.93px;font-size:12.6px;color:#6a2350;transform:scaleX(1.088);transform-origin:0 0;">SO</div>
<div class="t" style="left:959.93px;top:541.93px;font-size:12.6px;color:#22384a;transform:scaleX(1.060);transform-origin:0 0;">MG</div>
<div class="t" style="left:227.40px;top:53.77px;font-size:10.2px;color:#555;transform:scaleX(0.870);transform-origin:0 0;">A</div>
<div class="t" style="left:242.80px;top:55.12px;font-size:8.6px;color:#555;transform:scaleX(0.962);transform-origin:0 0;">A</div>
<div class="t" style="left:234.48px;top:73.75px;font-size:8.8px;font-weight:bold;color:#444;transform:scaleX(1.001);transform-origin:0 0;">A</div>
<div class="t" style="left:463.10px;top:73.69px;font-size:11px;color:#555;transform:scaleX(0.875);transform-origin:0 0;">$</div>
<div class="t" style="left:483.92px;top:74.73px;font-size:10px;color:#555;transform:scaleX(1.085);transform-origin:0 0;">%</div>
<div class="t" style="left:497.96px;top:75.84px;font-size:6.8px;color:#555;transform:scaleX(0.897);transform-origin:0 0;">000</div>
<div class="t" style="left:522.28px;top:72.92px;font-size:6.0px;color:#555;transform:scaleX(1.338);transform-origin:0 0;">,0</div>
<div class="t" style="left:518.85px;top:78.02px;font-size:6.0px;color:#555;transform:scaleX(1.212);transform-origin:0 0;">,00</div>
<div class="t" style="left:536.50px;top:72.42px;font-size:6.0px;color:#555;transform:scaleX(0.922);transform-origin:0 0;">,00</div>
<div class="t" style="left:537.24px;top:78.02px;font-size:6.0px;color:#555;transform:scaleX(1.408);transform-origin:0 0;">,0</div>
<div class="t" style="left:250px;top:116.5px;font-size:10px;color:#555;font-family:'Liberation Serif',serif;font-style:italic">f<span style="font-size:7px">x</span></div>
</body></html>
